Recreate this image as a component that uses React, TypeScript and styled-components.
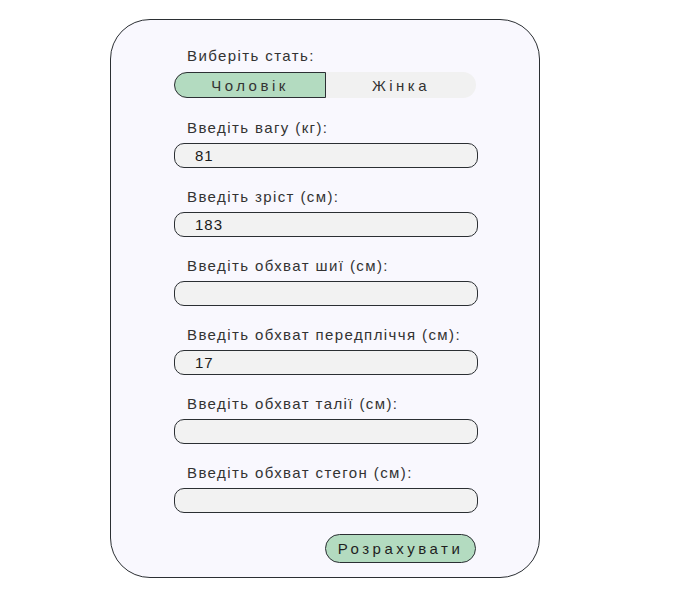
import { useState } from "react";
import styled, { createGlobalStyle } from "styled-components";

const GlobalStyle = createGlobalStyle`
  body {
    margin: 0;
    background: #ffffff;
    font-family: "Liberation Sans", Arial, sans-serif;
  }
`;

const Page = styled.div`
  padding: 19px 0 0 110px;
`;

const Card = styled.form`
  box-sizing: border-box;
  width: 430px;
  height: 559px;
  padding: 27px 62px 0 63px;
  background: #f9f8fe;
  border: 1.5px solid #2b2f33;
  border-radius: 40px;
  display: flex;
  flex-direction: column;
`;

const Field = styled.div`
  display: flex;
  flex-direction: column;
  margin-bottom: 20px;
`;

const Label = styled.label`
  padding-left: 13px;
  height: 18px;
  line-height: 18px;
  margin-bottom: 6px;
  font-size: 15px;
  letter-spacing: 1.4px;
  color: #333333;
`;

const Toggle = styled.div`
  display: flex;
  width: 302px;
  height: 26px;
  margin: 1px 0 1px;
  border-radius: 13px;
  background: #f1f1f1;
`;

const ToggleOption = styled.button<{ $active: boolean }>`
  box-sizing: border-box;
  flex: 1;
  height: 100%;
  padding: 0;
  font-family: inherit;
  font-size: 15px;
  letter-spacing: 3.5px;
  color: #333333;
  cursor: pointer;
  background: ${(p) => (p.$active ? "#b3dbc0" : "transparent")};
  border: ${(p) => (p.$active ? "1px solid #2b2f33" : "none")};
  border-radius: ${(p) => (p.$active ? "13px 0 0 13px" : "0 13px 13px 0")};
`;

const Input = styled.input`
  box-sizing: border-box;
  width: 304px;
  height: 25px;
  padding: 0 0 0 20px;
  font-family: inherit;
  font-size: 15px;
  letter-spacing: 1px;
  color: #1a1a1a;
  background: #f2f2f2;
  border: 1px solid #2b2f33;
  border-radius: 10px;
  outline: none;
`;

const Actions = styled.div`
  display: flex;
  justify-content: flex-end;
  width: 302px;
  margin-top: 1px;
`;

const Submit = styled.button`
  box-sizing: border-box;
  width: 151px;
  height: 29px;
  padding: 0;
  font-family: inherit;
  font-size: 15px;
  letter-spacing: 3.5px;
  color: #1f1f1f;
  background: #b3dbc0;
  border: 1px solid #2b2f33;
  border-radius: 15px;
  cursor: pointer;
`;

const fields = [
  { label: "Введіть вагу (кг):", value: "81" },
  { label: "Введіть зріст (см):", value: "183" },
  { label: "Введіть обхват шиї (см):", value: "" },
  { label: "Введіть обхват передпліччя (см):", value: "17" },
  { label: "Введіть обхват талії (см):", value: "" },
  { label: "Введіть обхват стегон (см):", value: "" },
];

export default function App() {
  const [sex, setSex] = useState<"m" | "f">("m");
  const [values, setValues] = useState(fields.map((f) => f.value));

  return (
    <>
      <GlobalStyle />
      <Page>
        <Card onSubmit={(e) => e.preventDefault()}>
          <Field>
            <Label>Виберіть стать:</Label>
            <Toggle>
              <ToggleOption type="button" $active={sex === "m"} onClick={() => setSex("m")}>
                Чоловік
              </ToggleOption>
              <ToggleOption type="button" $active={sex === "f"} onClick={() => setSex("f")}>
                Жінка
              </ToggleOption>
            </Toggle>
          </Field>
          {fields.map((f, i) => (
            <Field key={f.label}>
              <Label>{f.label}</Label>
              <Input
                value={values[i]}
                onChange={(e) =>
                  setValues((v) => v.map((x, j) => (j === i ? e.target.value : x)))
                }
              />
            </Field>
          ))}
          <Actions>
            <Submit type="submit">Розрахувати</Submit>
          </Actions>
        </Card>
      </Page>
    </>
  );
}
